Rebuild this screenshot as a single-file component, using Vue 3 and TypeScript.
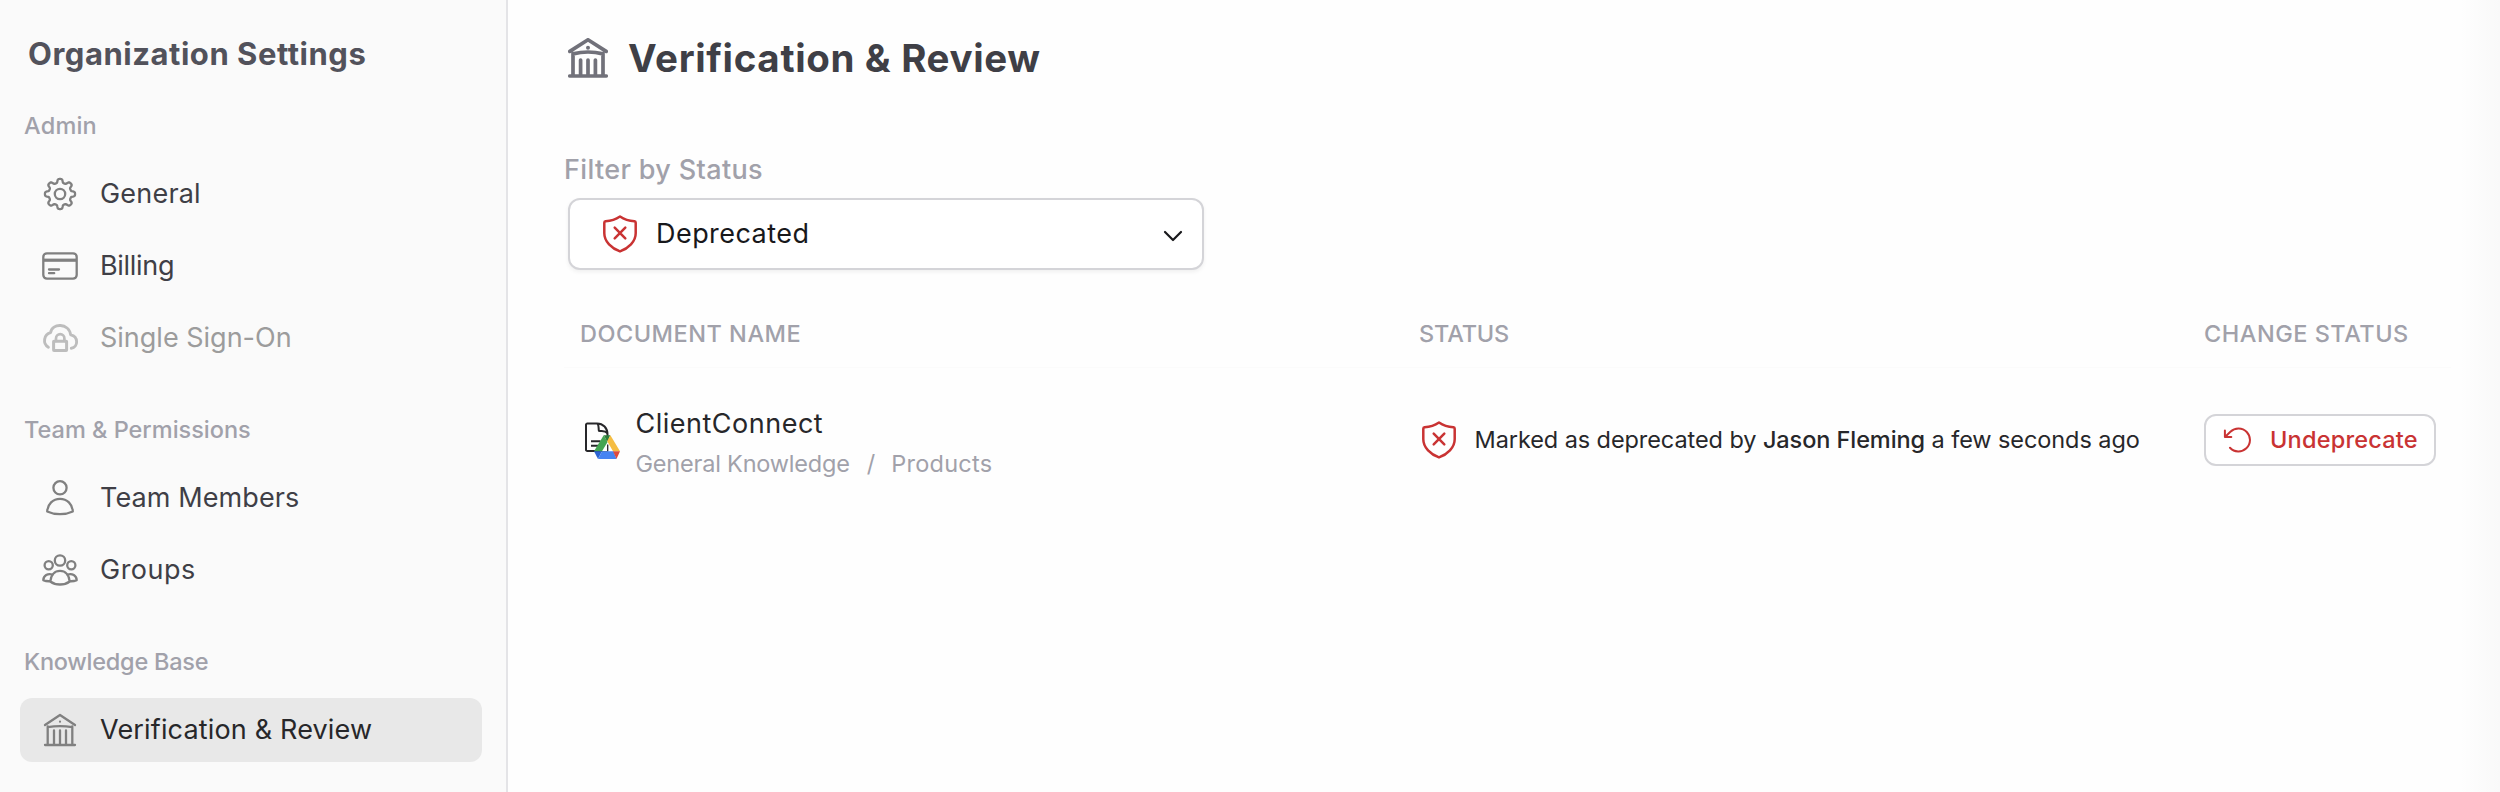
<script setup lang="ts">
interface NavItem { label: string; icon: string; disabled?: boolean; active?: boolean; cls: string }
interface NavGroup { title: string; cls: string; items: NavItem[] }

const groups: NavGroup[] = [
  {
    title: 'Admin', cls: 'g-admin',
    items: [
      { label: 'General', icon: 'gear', cls: 't-general' },
      { label: 'Billing', icon: 'card', cls: 't-billing' },
      { label: 'Single Sign-On', icon: 'cloud', disabled: true, cls: 't-sso' },
    ],
  },
  {
    title: 'Team & Permissions', cls: 'g-team',
    items: [
      { label: 'Team Members', icon: 'user', cls: 't-members' },
      { label: 'Groups', icon: 'users', cls: 't-groups' },
    ],
  },
  {
    title: 'Knowledge Base', cls: 'g-kb',
    items: [{ label: 'Verification & Review', icon: 'bank', active: true, cls: 't-verify' }],
  },
]

function gearPath(): string {
  const pts: string[] = []
  const steps = 160
  for (let i = 0; i < steps; i++) {
    const a = (i / steps) * Math.PI * 2
    const wave = Math.cos(a * 8)
    const r = 13.2 + 1.9 * Math.tanh(wave * 2.2)
    pts.push(`${(20 + r * Math.sin(a)).toFixed(2)} ${(20 - r * Math.cos(a)).toFixed(2)}`)
  }
  return `M${pts.join('L')}Z`
}
const gear = gearPath()
</script>

<template>
  <div class="page">
    <aside class="sidebar">
      <h2 class="side-title"><span>Organization Settings</span></h2>
      <nav>
        <section v-for="g in groups" :key="g.title" class="group">
          <h3 class="group-title"><span :class="g.cls">{{ g.title }}</span></h3>
          <a v-for="it in g.items" :key="it.label" class="item" :class="{ active: it.active, disabled: it.disabled }">
            <svg class="nav-icon" viewBox="0 0 40 40" fill="none" stroke="currentColor" stroke-width="2.3" stroke-linecap="round" stroke-linejoin="round">
              <template v-if="it.icon === 'gear'">
                <path :d="gear" />
                <circle cx="20" cy="20" r="5.2" />
              </template>
              <template v-else-if="it.icon === 'card'">
                <rect x="3.3" y="7.3" width="33.4" height="25.4" rx="3.6" />
                <path d="M4 14.2h32" stroke-width="3.2" stroke-linecap="butt" />
                <path d="M9 23.5h10M9 27.2h5.2" />
              </template>
              <template v-else-if="it.icon === 'cloud'">
                <path d="M8.4 29.2a8 8 0 0 1 2.2-14.6c1.2-9.8 18.4-9.8 20.1 2.3 7.8 1.6 7.8 12.4.6 13.3" stroke-width="2.9" />
                <rect x="13.6" y="23.2" width="13" height="9.2" rx=".4" stroke-width="3" />
                <path d="M16 23v-2.6a4.2 4.2 0 0 1 8.4 0V23" stroke-width="2.7" />
              </template>
              <template v-else-if="it.icon === 'user'">
                <circle cx="20" cy="9.8" r="6.6" />
                <path d="M7.2 33.5c.3-7.5 5.8-12.7 12.8-12.7s12.5 5.2 12.8 12.7c-7.3 3.5-18.3 3.5-25.6 0z" />
              </template>
              <template v-else-if="it.icon === 'users'">
                <circle cx="20" cy="10.5" r="5.2" />
                <circle cx="8.7" cy="15.3" r="4.1" />
                <circle cx="31.3" cy="15.3" r="4.1" />
                <path d="M10.3 31.5c.6-6.5 4.4-10.7 9.7-10.7s9.1 4.2 9.7 10.7c-5.2 4-14.2 4-19.4 0z" />
                <path d="M12.5 24.6c-4.800-1.800-9 1.200-9.200 5.500 2 .9 4.400 1.300 6.900 1.100M27.500 24.600c4.800-1.800 9 1.200 9.200 5.500-2 .9-4.400 1.300-6.900 1.100" />
              </template>
              <template v-else>
                <path d="M5 15 20 5l15 10M7.7 16.5V34.5M32.3 16.5V34.5M7.7 17.2c8-1.3 16.6-1.3 24.600 0M5 35h30M14 20.500v14M20 20.500v14M26 20.500v14" />
                <circle cx="20" cy="11.7" r=".5" stroke-width="1.2" />
              </template>
            </svg>
            <span class="label" :class="it.cls">{{ it.label }}</span>
          </a>
        </section>
      </nav>
    </aside>

    <main class="main">
      <header class="head">
        <svg class="head-icon" viewBox="0 0 40 40" fill="none" stroke="currentColor" stroke-width="3.7" stroke-linecap="round" stroke-linejoin="round">
          <path d="M1.8 13.4 20 1.8l18.2 11.6M5 15.5V37.5M35 15.5V37.5M5 15.9c9.5-2.4 20.5-2.4 30 0M1.8 38h36.4M12.6 22v15M20 22v15M27.4 22v15" />
          <circle cx="20" cy="9.7" r="1.1" stroke-width="1.8" fill="currentColor" />
        </svg>
        <h1><span>Verification &amp; Review</span></h1>
      </header>

      <label class="filter-label"><span>Filter by Status</span></label>
      <div class="select">
        <svg class="shield" viewBox="0 0 36 38" fill="none" stroke="currentColor" stroke-width="2.5" stroke-linecap="round" stroke-linejoin="round">
          <path d="M18 1.500c4.600 3.100 9.500 4.400 14.400 4.700q1.300.2 1.300 1.500v10.500c0 8.400-7.400 15.200-15.700 18.200C9.700 33.400 2.300 26.600 2.300 18.200V7.700q0-1.300 1.300-1.500c4.900-.3 9.800-1.600 14.400-4.700z" />
          <path d="M12.700 12.700l10.600 10.600M23.300 12.700 12.700 23.300" />
        </svg>
        <span class="select-text">Deprecated</span>
        <svg class="chevron" viewBox="0 0 20 12" fill="none" stroke="currentColor" stroke-width="2.2" stroke-linecap="round" stroke-linejoin="round"><path d="M2 2l8 8 8-8" /></svg>
      </div>

      <div class="table">
        <div class="row thead">
          <div><span class="th th-doc">DOCUMENT NAME</span></div>
          <div><span class="th th-status">STATUS</span></div>
          <div><span class="th th-change">CHANGE STATUS</span></div>
        </div>
        <div class="row tbody">
          <div class="doc">
            <svg class="doc-icon" viewBox="0 0 37 39" fill="none" stroke-linejoin="round">
              <path d="M2 3.800a1.300 1.300 0 0 1 1.300-1.300h9.700c6.200 0 10.500 4.500 10.500 11V30H3.300A1.300 1.300 0 0 1 2 28.700z" stroke="#27272a" stroke-width="2" />
              <path d="M13.500 2.700c1.700 2 .8 4.300 1.400 7 2.500.8 6-.2 8.400 2.300" stroke="#27272a" stroke-width="2" />
              <path d="M7 20.200h9.500M7 24.700h8" stroke="#27272a" stroke-width="2" />
              <path d="M16 30.300 23.200 19l7 11.300z" fill="#fff" />
              <path d="M23.700 23.500v6.500" stroke="#27272a" stroke-width="1.300" />
              <path d="M10 30.300 19.700 14.300 23.600 21 18 30.300z" fill="#43a552" />
              <path d="M19.700 14.300h6.700L23.200 20.300z" fill="#2c7d3b" />
              <path d="M26.400 14.300 36 30.300h-7L23.200 20.300z" fill="#f5bd42" />
              <path d="M10 30.300h8L14 38z" fill="#2c64d2" />
              <path d="M18 30.300h11.500L32.500 38H14z" fill="#4684f2" />
              <path d="M29 30.300h7L32.500 38z" fill="#dd4b3e" />
            </svg>
            <div class="doc-text">
              <div class="doc-name"><span>ClientConnect</span></div>
              <div class="crumbs"><span class="c1">General Knowledge</span><span class="slash">/</span><span class="c2">Products</span></div>
            </div>
          </div>
          <div class="status">
            <svg class="shield" viewBox="0 0 36 38" fill="none" stroke="currentColor" stroke-width="2.5" stroke-linecap="round" stroke-linejoin="round">
              <path d="M18 1.500c4.600 3.100 9.500 4.400 14.400 4.700q1.300.2 1.300 1.500v10.500c0 8.400-7.400 15.200-15.700 18.200C9.700 33.400 2.300 26.600 2.300 18.200V7.700q0-1.300 1.300-1.500c4.900-.3 9.800-1.600 14.400-4.700z" />
              <path d="M12.700 12.700l10.600 10.600M23.300 12.700 12.700 23.300" />
            </svg>
            <p><span class="s1">Marked as deprecated by </span><b>Jason Fleming</b><span class="s2"> a few seconds ago</span></p>
          </div>
          <div>
            <button class="undo">
              <svg viewBox="0 0 28 28" fill="none" stroke="currentColor" stroke-width="2" stroke-linecap="round" stroke-linejoin="round">
                <path d="M1.900 4.600V11h6.400M2 11 7.400 5.700A11.500 11.500 0 1 1 7 21.700" />
              </svg>
              <span>Undeprecate</span>
            </button>
          </div>
        </div>
      </div>
      <div class="edge"></div>
    </main>
  </div>
</template>

<style>
body { margin: 0; background: #fff; }
</style>

<style scoped>
.page { display: flex; width: 2500px; height: 792px; overflow: hidden; background: #fefefe; font-family: Inter, "Liberation Sans", sans-serif; }
h1, h2, h3, p { margin: 0; }
span { white-space: pre; }
.sidebar { box-sizing: border-box; width: 508px; flex: none; background: #fafafa; border-right: 2px solid #e4e4e7; padding: 34px 24px 0 20px; }
.side-title { height: 40px; line-height: 40px; padding-left: 8px; font-size: 31px; font-weight: 700; letter-spacing: .53px; color: #52525b; }
.group { padding-top: 36px; height: 260px; box-sizing: border-box; display: flex; flex-direction: column; gap: 8px; }
.group:nth-child(1) { height: 304px; }
.group:nth-child(2) { height: 232px; }
.group-title { flex: none; height: 44px; line-height: 32px; padding-left: 4px; font-size: 23.5px; font-weight: 500; color: #a1a1aa; }
.g-admin { letter-spacing: .2px; }
.g-kb { letter-spacing: -.25px; }
.item { flex: none; display: flex; align-items: center; height: 64px; border-radius: 12px; padding-left: 20px; gap: 20px; box-sizing: border-box; color: #808080; }
.item.active { background: #e8e8e8; }
.nav-icon { width: 40px; height: 40px; }
.item.disabled .nav-icon { color: #bdbdbd; }
.label { font-size: 27px; line-height: 36px; color: #3f3f46; }
.active .label { color: #27272a; }
.disabled .label { color: #9c9c9c; }
.t-general { letter-spacing: .2px; }
.t-billing { letter-spacing: -.3px; }
.t-members { letter-spacing: .1px; }
.t-groups { letter-spacing: .5px; }
.t-verify { letter-spacing: .16px; }

.main { position: relative; flex: 1; padding: 36px 49px 0 56px; }
.head { display: flex; align-items: center; gap: 20px; height: 44px; padding-left: 4px; }
.head-icon { width: 40px; height: 40px; color: #71717a; }
h1 { font-size: 38.5px; line-height: 44px; font-weight: 700; letter-spacing: .65px; color: #3f3f46; }
.filter-label { display: block; margin-top: 72px; height: 36px; line-height: 36px; font-size: 27px; font-weight: 500; letter-spacing: .35px; color: #a1a1aa; }
.select { box-sizing: border-box; display: flex; align-items: center; width: 636px; height: 72px; margin: 10px 0 0 4px; padding: 0 19px 0 32px; border: 2px solid #d4d4d8; border-radius: 12px; background: #fff; box-shadow: 0 2px 4px rgba(0,0,0,.06); color: #18181b; }
.shield { flex: none; width: 36px; height: 38px; color: #c93333; }
.select-text { margin-left: 18px; font-size: 27px; line-height: 36px; letter-spacing: .45px; }
.chevron { width: 20px; height: 12px; margin-left: auto; margin-top: 3px; }

.table { margin-top: 26px; }
.row { display: grid; grid-template-columns: 855px 785px 1fr; }
.thead { height: 72px; border-bottom: 1px solid #fbfbfb; box-sizing: border-box; align-items: center; }
.th { display: block; line-height: 32px; font-size: 23.5px; font-weight: 500; letter-spacing: .5px; color: #a1a1aa; padding-top: 5px; }
.th-doc { padding-left: 16px; }
.th-status { letter-spacing: -.15px; }
.tbody { height: 144px; align-items: center; }
.doc { display: flex; align-items: center; padding-left: 20px; }
.doc-icon { width: 37px; height: 39px; flex: none; }
.doc-text { margin-left: 14.5px; margin-top: 7px; }
.doc-name { font-size: 27px; line-height: 40px; letter-spacing: .5px; color: #27272a; }
.crumbs { display: flex; font-size: 23.5px; line-height: 40px; color: #a1a1aa; }
.c1 { letter-spacing: -.2px; }
.c2 { letter-spacing: .25px; }
.slash { margin: 0 16px 0 17px; }
.status { display: flex; align-items: center; gap: 17.5px; padding-left: 2px; }
.status p { font-size: 23.5px; line-height: 32px; letter-spacing: -.08px; color: #27272a; white-space: nowrap; }
.status b { font-weight: 500; }
.undo { display: flex; align-items: center; box-sizing: border-box; width: 232px; height: 52px; padding: 0 0 0 17px; gap: 19px; border: 2px solid #d4d4d8; border-radius: 12px; background: #fff; color: #c93333; font: 500 23.5px/32px Inter, "Liberation Sans", sans-serif; letter-spacing: .2px; }
.undo svg { width: 28px; height: 28px; flex: none; }
.edge { position: absolute; top: 0; right: 0; bottom: 0; width: 40px; background: linear-gradient(to right, rgba(250,250,250,0), #f9f9f9); }
</style>
